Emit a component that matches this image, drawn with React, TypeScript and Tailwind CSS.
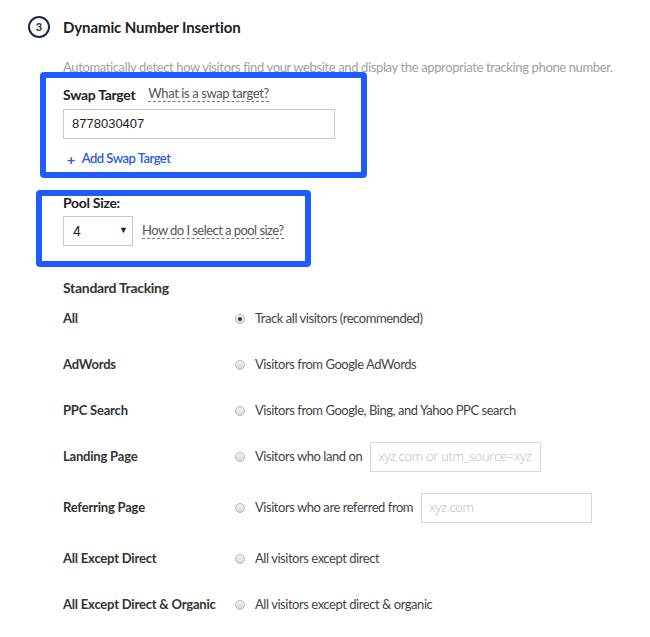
import React from "react";

const Radio = ({ checked = false }: { checked?: boolean }) => (
  <span className="flex h-[10px] w-[10px] shrink-0 items-center justify-center rounded-full border border-[#b8b8b8] bg-gradient-to-b from-[#f4f4f4] to-[#d6d6d6]">
    {checked && <span className="h-[4px] w-[4px] rounded-full bg-[#333]" />}
  </span>
);

type Row = { label: string; text: string; input?: string; cls: string };

const rows: Row[] = [
  { label: "All", text: "Track all visitors (recommended)", cls: "" },
  { label: "AdWords", text: "Visitors from Google AdWords", cls: "" },
  { label: "PPC Search", text: "Visitors from Google, Bing, and Yahoo PPC search", cls: "" },
  { label: "Landing Page", text: "Visitors who land on", input: "xyz.com or utm_source=xyz", cls: "" },
  { label: "Referring Page", text: "Visitors who are referred from", input: "xyz.com", cls: "mt-[5px]" },
  { label: "All Except Direct", text: "All visitors except direct", cls: "mt-[5px]" },
  { label: "All Except Direct & Organic", text: "All visitors except direct & organic", cls: "" },
];

export default function App() {
  return (
    <div className="min-h-[637px] w-[650px] bg-white pl-[28px] pt-[16px] font-['Lato',sans-serif] text-[#333]">
      <div className="flex h-[22px] items-center">
        <div className="flex h-[22px] w-[22px] items-center justify-center rounded-full border-2 border-[#1c2b45] text-[11px] font-bold text-[#1c2b45]">
          3
        </div>
        <div className="ml-[13px] text-[15px] font-bold tracking-[-0.1px] text-[#222]">Dynamic Number Insertion</div>
      </div>

      <div className="ml-[35px] mt-[19px] h-[15px] whitespace-nowrap text-[13px] leading-[20px] tracking-[-0.37px] text-[#a0a0a0]">
        Automatically detect how visitors find your website and display the appropriate tracking phone number.
      </div>

      <div className="relative ml-[12px] h-[106px] w-[327px] rounded-[4px] border-[6px] border-[#1f5cff] bg-white pl-[17px]">
        <div className="mt-[6px] flex h-[20px] items-center">
          <span className="text-[14px] font-bold tracking-[-0.3px] text-[#222]">Swap Target</span>
          <span className="ml-[13px] border-b border-dashed border-[#777] text-[13px] leading-[15px] tracking-[-0.4px] text-[#555]">
            What is a swap target?
          </span>
        </div>
        <div className="mt-[5px] flex h-[30px] w-[272px] items-center border border-[#c8c8c8] pl-[8px] font-['Liberation_Sans',sans-serif] text-[13px] text-[#222]">
          8778030407
        </div>
        <div className="mt-[10px] flex h-[20px] items-center text-[13px] font-semibold tracking-[-0.5px] text-[#2a5bd7]">
          <span className="ml-[4px] text-[14px] font-bold">+</span>
          <span className="ml-[7px]">Add Swap Target</span>
        </div>
      </div>

      <div className="relative ml-[8px] mt-[12px] h-[77px] w-[275px] rounded-[4px] border-[6px] border-[#1f5cff] bg-white pl-[21px]">
        <div className="h-[14px] text-[14px] font-bold leading-[14px] tracking-[-0.3px] text-[#222]">Pool Size:</div>
        <div className="mt-[6px] flex items-center">
          <div className="flex h-[30px] w-[70px] items-center justify-between border border-[#c8c8c8] pl-[9px] pr-[4px] font-['Liberation_Sans',sans-serif] text-[14px] text-[#222]">
            <span>4</span>
            <span className="text-[9px]">▼</span>
          </div>
          <span className="ml-[9px] border-b border-dashed border-[#777] text-[13px] leading-[15px] tracking-[-0.55px] text-[#555]">
            How do I select a pool size?
          </span>
        </div>
      </div>

      <div className="ml-[35px] mt-[11px] h-[18px] text-[14px] font-bold leading-[20px] tracking-[-0.3px] text-[#333]">
        Standard Tracking
      </div>

      <div className="ml-[35px] flex flex-col">
        {rows.map((r) => (
          <div key={r.label} className={`flex h-[46px] items-center ${r.cls}`}>
            <div className="w-[172px] shrink-0 text-[13px] font-bold tracking-[-0.2px] text-[#333]">{r.label}</div>
            <Radio checked={r.label === "All"} />
            <span className="ml-[10px] whitespace-nowrap text-[13px] tracking-[-0.45px] text-[#444]">{r.text}</span>
            {r.input && (
              <div className="ml-[8px] flex h-[30px] w-[171px] items-center border border-[#d6d6d6] pl-[7px] font-['Open_Sans',sans-serif] text-[13px] font-light tracking-[-0.3px] text-[#b8b8b8]">
                {r.input}
              </div>
            )}
          </div>
        ))}
      </div>
    </div>
  );
}
